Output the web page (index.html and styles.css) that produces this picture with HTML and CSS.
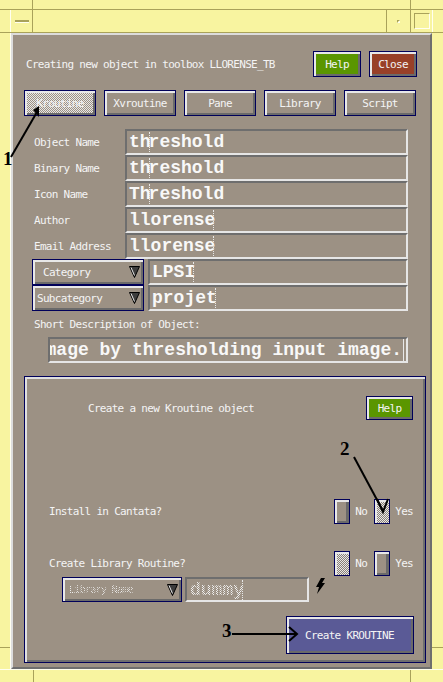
FILE: index.html
```html
<!DOCTYPE html>
<html lang="en">
<head>
    <meta charset="UTF-8">
    <meta name="viewport" content="width=device-width, initial-scale=1.0">
    <title>Create Kroutine</title>
    <link rel="stylesheet" href="styles.css">
</head>
<body>
<div class="wm">
    <div class="wm-top">
        <div class="top-a"></div>
        <div class="top-b"></div>
        <div class="top-c"></div>
    </div>
    <div class="wm-title">
        <div class="t-edge"></div>
        <div class="t-menu"><span class="dash"></span></div>
        <div class="t-name"></div>
        <div class="t-icon"><span class="dot"></span></div>
        <div class="t-max"><span class="maxbox"></span></div>
        <div class="t-edge-r"></div>
    </div>

    <div class="wm-mid">
        <div class="side"><div class="side-top"></div></div>

        <div class="client">
            <div class="head">
                <span class="head-title">Creating new object in toolbox LLORENSE_TB</span>
                <div class="btn btn-help">Help</div>
                <div class="btn btn-close">Close</div>
            </div>

            <div class="tabs">
                <div class="btn tab is-active">Kroutine</div>
                <div class="btn tab">Xvroutine</div>
                <div class="btn tab">Pane</div>
                <div class="btn tab">Library</div>
                <div class="btn tab">Script</div>
            </div>

            <div class="form">
                <div class="row">
                    <span class="lbl">Object Name</span>
                    <div class="field">th<i class="caret"></i>reshold</div>
                </div>
                <div class="row">
                    <span class="lbl">Binary Name</span>
                    <div class="field">th<i class="caret"></i>reshold</div>
                </div>
                <div class="row">
                    <span class="lbl">Icon Name</span>
                    <div class="field">Th<i class="caret"></i>reshold</div>
                </div>
                <div class="row">
                    <span class="lbl">Author</span>
                    <div class="field">llorense<i class="caret"></i></div>
                </div>
                <div class="row">
                    <span class="lbl">Email Address</span>
                    <div class="field">llorense<i class="caret"></i></div>
                </div>
                <div class="row">
                    <div class="dropdown dd-cat">
                        <span>Category</span>
                        <svg class="tri" width="11" height="12" viewBox="0 0 11 12"><path d="M0.5 0.5H10.5L5.5 11.5Z" fill="#3c3c3c" stroke="#000"/><path d="M2 1.5L5.5 9.5" stroke="#e8e8e8"/></svg>
                    </div>
                    <div class="field field-cat">LPSI<i class="caret"></i></div>
                </div>
                <div class="row">
                    <div class="dropdown dd-sub">
                        <span>Subcategory</span>
                        <svg class="tri" width="11" height="12" viewBox="0 0 11 12"><path d="M0.5 0.5H10.5L5.5 11.5Z" fill="#3c3c3c" stroke="#000"/><path d="M2 1.5L5.5 9.5" stroke="#e8e8e8"/></svg>
                    </div>
                    <div class="field field-cat">projet<i class="caret"></i></div>
                </div>
            </div>

            <div class="desc-label">Short Description of Object:</div>
            <div class="field desc">
                <span class="desc-text">Create binary image by thresholding input image.</span><i class="caret caret-end"></i>
            </div>

            <div class="panel">
                <div class="panel-head">
                    <span>Create a new Kroutine object</span>
                    <div class="btn btn-help btn-small">Help</div>
                </div>

                <div class="opt-row opt-install">
                    <span class="opt-lbl">Install in Cantata?</span>
                    <div class="choice"><span class="toggle"></span>No</div>
                    <div class="choice"><span class="toggle is-on"></span>Yes</div>
                </div>

                <div class="opt-row opt-lib">
                    <span class="opt-lbl">Create Library Routine?</span>
                    <div class="choice"><span class="toggle is-on"></span>No</div>
                    <div class="choice"><span class="toggle"></span>Yes</div>
                </div>

                <div class="lib-row">
                    <div class="dropdown dd-lib">
                        <span class="stipple-text small">Library Name</span>
                        <svg class="tri" width="11" height="12" viewBox="0 0 11 12"><path d="M0.5 0.5H10.5L5.5 11.5Z" fill="#3c3c3c" stroke="#000"/><path d="M2 1.5L5.5 9.5" stroke="#e8e8e8"/></svg>
                    </div>
                    <div class="field field-lib"><span class="stipple-text">dummy</span><i class="caret"></i></div>
                    <svg class="bolt" width="12" height="16" viewBox="0 0 12 16"><path d="M7 0H11L8 5H11L3 16L5 9H2Z" fill="#000"/></svg>
                </div>

                <div class="create-row">
                    <div class="btn btn-create">Create KROUTINE</div>
                </div>
            </div>
        </div>

        <div class="side"><div class="side-top"></div></div>
    </div>

    <div class="wm-bottom">
        <div class="bot-a"></div>
        <div class="bot-b"></div>
        <div class="bot-c"></div>
    </div>

    <!-- callout numbers drawn over the dialog -->
    <svg class="notes" width="443" height="682" viewBox="0 0 443 682">
        <text x="3" y="165" class="note-num">1</text>
        <path d="M11 157L37 112" class="note-line"/>
        <path d="M33 110L39 106L39 117Z" fill="#000"/>
        <text x="340" y="455" class="note-num">2</text>
        <path d="M354 457L383 511" class="note-line"/>
        <path d="M377 499L383 512L388 499" class="note-line"/>
        <text x="222" y="637" class="note-num">3</text>
        <path d="M232 634H296" class="note-line"/>
        <path d="M289 627L297 634L289 641" class="note-line"/>
    </svg>
</div>
</body>
</html>
```

FILE: styles.css
```css
* {
    box-sizing: border-box;
}
body {
    margin: 0;
    width: 443px;
    height: 682px;
    overflow: hidden;
    background: #f8f4a0;
    font-family: "DejaVu Sans Mono", monospace;
    font-size: 11px;
    letter-spacing: -0.7px;
    color: #f4f4f4;
}
.wm {
    position: relative;
    width: 443px;
    height: 682px;
    display: flex;
    flex-direction: column;
}

/* window manager frame */
.wm-top {
    height: 10px;
    display: flex;
    border-bottom: 1px solid #a9a25a;
}
.top-a {
    width: 33px;
    border-right: 1px solid #a9a25a;
}
.top-b {
    width: 378px;
    border-right: 1px solid #a9a25a;
}
.top-c {
    flex: 1;
}
.wm-title {
    height: 23px;
    display: flex;
    border-bottom: 1px solid #a9a25a;
}
.t-edge {
    width: 11px;
    border-right: 1px solid #fffff0;
}
.t-menu {
    width: 22px;
    border-right: 1px solid #a9a25a;
    display: flex;
    align-items: center;
    justify-content: center;
}
.dash {
    width: 14px;
    height: 3px;
    border-top: 2px solid #a9a25a;
    border-bottom: 1px solid #fffff0;
}
.t-name {
    width: 354px;
    border-right: 1px solid #a9a25a;
}
.t-icon {
    width: 24px;
    border-right: 1px solid #a9a25a;
    display: flex;
    align-items: center;
    justify-content: center;
}
.dot {
    width: 3px;
    height: 3px;
    border-top: 1px solid #a9a25a;
    border-left: 1px solid #a9a25a;
    border-right: 1px solid #fffff0;
    border-bottom: 1px solid #fffff0;
}
.t-max {
    width: 22px;
    border-right: 1px solid #fffff0;
    display: flex;
    align-items: center;
    justify-content: center;
}
.maxbox {
    width: 16px;
    height: 16px;
    border-top: 1px solid #a9a25a;
    border-left: 1px solid #a9a25a;
    border-right: 1px solid #fffff0;
    border-bottom: 1px solid #fffff0;
}
.t-edge-r {
    flex: 1;
}
.wm-mid {
    flex: 1;
    display: flex;
}
.side {
    width: 11px;
}
.side:first-child {
    border-right: 1px solid #fffff0;
}
.side-top {
    height: 615px;
    border-bottom: 1px solid #a9a25a;
}
.wm-bottom {
    height: 13px;
    display: flex;
    border-top: 1px solid #fffff0;
}
.bot-a {
    width: 34px;
    border-right: 1px solid #a9a25a;
}
.bot-b {
    width: 377px;
    border-right: 1px solid #a9a25a;
}
.bot-c {
    flex: 1;
}

/* dialog */
.client {
    width: 421px;
    background: #9c9184;
    border-top: 2px solid #dcdcdc;
    border-left: 2px solid #dcdcdc;
    border-right: 2px solid #6e6e6e;
    border-bottom: 2px solid #6e6e6e;
    display: flex;
    flex-direction: column;
}
.btn {
    border: 1px solid #00005a;
    box-shadow: inset 2px 2px 0 #e8e8e8, inset -2px -2px 0 #6a6a6a;
    display: flex;
    align-items: center;
    justify-content: center;
    color: #f4f4f4;
    background: #9c9184;
}
.head {
    margin-top: 16px;
    height: 26px;
    display: flex;
    align-items: center;
    padding: 0 13px 0 13px;
}
.head-title {
    flex: 1;
}
.btn-help {
    width: 48px;
    height: 26px;
    background: #5a9600;
}
.btn-close {
    width: 48px;
    height: 26px;
    margin-left: 8px;
    background: #984028;
}
.tabs {
    margin-top: 13px;
    padding-left: 11px;
    display: flex;
    gap: 8px;
}
.tab {
    width: 72px;
    height: 26px;
}
.tab.is-active {
    background: repeating-conic-gradient(#e8e8e8 0% 25%, #9c9184 0% 50%) 0 0 / 2px 2px;
}
.form {
    margin-top: 13px;
    display: flex;
    flex-direction: column;
}
.row {
    height: 26px;
    display: flex;
    align-items: center;
}
.lbl {
    width: 112px;
    padding-left: 21px;
}
.field {
    width: 283px;
    height: 26px;
    border-top: 2px solid #6e6e6e;
    border-left: 2px solid #6e6e6e;
    border-bottom: 2px solid #e6e6e6;
    border-right: 2px solid #e6e6e6;
    padding-left: 2px;
    display: flex;
    align-items: center;
    overflow: hidden;
    white-space: nowrap;
    font-family: "Liberation Mono", monospace;
    font-weight: bold;
    font-size: 18px;
    letter-spacing: 0;
    color: #f8f8f8;
}
.caret {
    display: inline-block;
    width: 1px;
    height: 20px;
    margin: 0 -1px 0 -2px;
    border-left: 1px dotted #e8e8e8;
}
.dropdown {
    height: 26px;
    border: 1px solid #00005a;
    box-shadow: inset 2px 2px 0 #e8e8e8, inset -2px -2px 0 #6a6a6a;
    display: flex;
    align-items: center;
    justify-content: space-between;
    padding-right: 3px;
}
.dd-cat {
    width: 112px;
    margin-left: 19px;
    padding-left: 10px;
}
.dd-sub {
    width: 112px;
    margin-left: 19px;
    padding-left: 4px;
}
.field-cat {
    width: 260px;
    margin-left: 4px;
}
.desc-label {
    margin-top: 7px;
    height: 13px;
    padding-left: 21px;
    line-height: 13px;
}
.desc {
    width: 360px;
    margin: 6px 0 0 35px;
    justify-content: flex-end;
    padding: 0 2px 0 0;
}
.desc-text {
    flex-shrink: 0;
}
.caret-end {
    height: 22px;
    margin: 0 0 0 1px;
    width: 4px;
    border: 1px solid #e8e8e8;
    border-left: none;
}

/* lower panel */
.panel {
    margin: 13px 0 0 11px;
    width: 402px;
    height: 287px;
    border: 1px solid #00005a;
    box-shadow: inset 2px 2px 0 #e0e0e0, inset -2px -2px 0 #6e6e6e;
    display: flex;
    flex-direction: column;
}
.panel-head {
    margin-top: 19px;
    height: 24px;
    padding: 0 12px 0 63px;
    display: flex;
    align-items: center;
    justify-content: space-between;
}
.btn-small {
    width: 47px;
    height: 24px;
}
.opt-row {
    height: 25px;
    display: flex;
    align-items: center;
    padding: 0 12px 0 24px;
}
.opt-install {
    margin-top: 79px;
}
.opt-lib {
    margin-top: 27px;
}
.opt-lbl {
    flex: 1;
}
.choice {
    display: flex;
    align-items: center;
    gap: 5px;
}
.choice + .choice {
    margin-left: 7px;
}
.toggle {
    width: 16px;
    height: 25px;
    border: 1px solid #00005a;
    box-shadow: inset 2px 2px 0 #e8e8e8, inset -3px -2px 0 #6a6a6a;
}
.toggle.is-on {
    box-shadow: inset 2px 2px 0 #e8e8e8;
    background: repeating-conic-gradient(#e8e8e8 0% 25%, #8a8076 0% 50%) 0 0 / 2px 2px;
}
.lib-row {
    margin-top: 1px;
    height: 25px;
    display: flex;
    align-items: center;
    padding-left: 37px;
}
.dd-lib {
    width: 120px;
    height: 25px;
    padding-left: 6px;
}
.field-lib {
    width: 124px;
    height: 25px;
    margin-left: 3px;
    padding-left: 3px;
}
.stipple-text {
    color: transparent;
    background: repeating-conic-gradient(#f0f0f0 0% 25%, transparent 0% 50%) 0 0 / 2px 2px;
    -webkit-background-clip: text;
    background-clip: text;
}
.stipple-text.small {
    font-size: 10px;
}
.bolt {
    margin: -8px 0 0 5px;
}
.create-row {
    margin-top: 14px;
    display: flex;
    justify-content: flex-end;
    padding-right: 11px;
}
.btn-create {
    width: 128px;
    height: 38px;
    background: #5a5a96;
    justify-content: flex-start;
    padding-left: 18px;
}

/* callouts */
.notes {
    position: absolute;
    top: 0;
    left: 0;
    pointer-events: none;
}
.note-num {
    font-family: "Liberation Serif", serif;
    font-weight: bold;
    font-size: 19px;
    letter-spacing: 0;
    fill: #000;
}
.note-line {
    fill: none;
    stroke: #000;
    stroke-width: 2;
}
```
